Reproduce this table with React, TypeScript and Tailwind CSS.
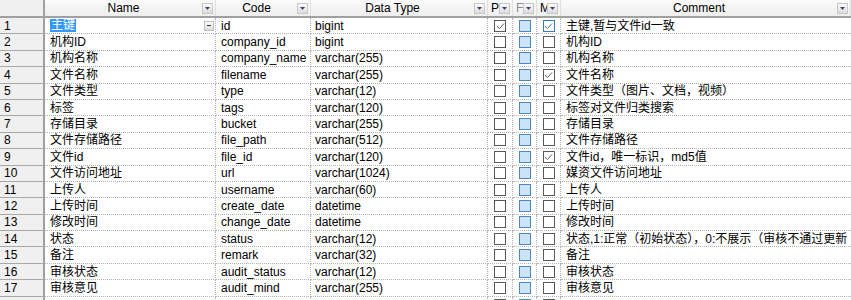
import React from "react";

type Row = {
  name: string;
  code: string;
  type: string;
  p: boolean;
  m: boolean;
  comment: string;
};

const rows: Row[] = [
  { name: "主键", code: "id", type: "bigint", p: true, m: true, comment: "主键,暂与文件id一致" },
  { name: "机构ID", code: "company_id", type: "bigint", p: false, m: false, comment: "机构ID" },
  { name: "机构名称", code: "company_name", type: "varchar(255)", p: false, m: false, comment: "机构名称" },
  { name: "文件名称", code: "filename", type: "varchar(255)", p: false, m: true, comment: "文件名称" },
  { name: "文件类型", code: "type", type: "varchar(12)", p: false, m: false, comment: "文件类型（图片、文档，视频）" },
  { name: "标签", code: "tags", type: "varchar(120)", p: false, m: false, comment: "标签对文件归类搜索" },
  { name: "存储目录", code: "bucket", type: "varchar(255)", p: false, m: false, comment: "存储目录" },
  { name: "文件存储路径", code: "file_path", type: "varchar(512)", p: false, m: false, comment: "文件存储路径" },
  { name: "文件id", code: "file_id", type: "varchar(120)", p: false, m: true, comment: "文件id，唯一标识，md5值" },
  { name: "文件访问地址", code: "url", type: "varchar(1024)", p: false, m: false, comment: "媒资文件访问地址" },
  { name: "上传人", code: "username", type: "varchar(60)", p: false, m: false, comment: "上传人" },
  { name: "上传时间", code: "create_date", type: "datetime", p: false, m: false, comment: "上传时间" },
  { name: "修改时间", code: "change_date", type: "datetime", p: false, m: false, comment: "修改时间" },
  { name: "状态", code: "status", type: "varchar(12)", p: false, m: false, comment: "状态,1:正常（初始状态），0:不展示（审核不通过更新" },
  { name: "备注", code: "remark", type: "varchar(32)", p: false, m: false, comment: "备注" },
  { name: "审核状态", code: "audit_status", type: "varchar(12)", p: false, m: false, comment: "审核状态" },
  { name: "审核意见", code: "audit_mind", type: "varchar(255)", p: false, m: false, comment: "审核意见" },
];

const font = { fontFamily: '"Liberation Sans", "Noto Sans CJK SC", sans-serif' };

function DropBtn() {
  return (
    <div className="w-[11px] h-[11px] flex items-center justify-center border border-[#c8c8c8] bg-gradient-to-b from-[#fafafa] to-[#dcdcdc] shrink-0">
      <svg width="5" height="3" viewBox="0 0 5 3">
        <path d="M0 0 L5 0 L2.5 3 Z" fill="#3a4a6a" />
      </svg>
    </div>
  );
}

function Check({ checked, variant }: { checked: boolean; variant: "grey" | "blue" | "fill" }) {
  const cls =
    variant === "fill"
      ? "border-[#4d87c0] bg-[#cce4f7]"
      : variant === "blue"
      ? "border-[#3d7ab8] bg-white"
      : "border-[#5a5a5a] bg-white";
  return (
    <div className={`w-[12px] h-[12px] border ${cls} flex items-center justify-center`}>
      {checked && (
        <svg width="9" height="8" viewBox="0 0 9 8">
          <path
            d="M1 4 L3.5 6.5 L8 1.5"
            fill="none"
            stroke={variant === "blue" ? "#3d7ab8" : "#606060"}
            strokeWidth="1"
          />
        </svg>
      )}
    </div>
  );
}

function HeaderCell({
  w,
  label,
  light,
  align = "center",
}: {
  w: string;
  label: string;
  light?: boolean;
  align?: "center" | "left";
}) {
  return (
    <div className={`${w} h-full flex items-center border-r border-[#e0e0e0] pr-[2px] shrink-0`}>
      <div
        className={`flex-1 overflow-hidden whitespace-nowrap ${
          align === "center" ? "text-center" : "text-left pl-[3px]"
        } ${light ? "text-[#8a8a8a]" : "text-black"}`}
      >
        {label}
      </div>
      <DropBtn />
    </div>
  );
}

export default function App() {
  return (
    <div className="w-[851px] h-[300px] overflow-hidden bg-white text-[12px] text-black" style={font}>
      {/* header */}
      <div className="flex h-[18px] border-b-2 border-[#a0a0a0] bg-gradient-to-b from-[#fbfbfb] to-[#eeeeee]">
        <div className="w-[45px] h-full border-r-2 border-[#a0a0a0] bg-[#f0f0f0] shrink-0" />
        <HeaderCell w="w-[171px]" label="Name" />
        <HeaderCell w="w-[95px]" label="Code" />
        <HeaderCell w="w-[177px]" label="Data Type" />
        <HeaderCell w="w-[25px]" label="P" align="left" />
        <HeaderCell w="w-[24px]" label="F" align="left" light />
        <HeaderCell w="w-[24px]" label="M" align="left" />
        <HeaderCell w="flex-1" label="Comment" />
      </div>
      {rows.map((r, i) => (
        <div key={i} className="flex h-[16.4px]">
          <div className="w-[45px] h-full border-r-2 border-b border-r-[#a0a0a0] border-b-[#a8a8a8] bg-[#f0f0f0] pl-[4px] flex items-center shrink-0">
            {i + 1}
          </div>
          <div className="w-[171px] h-full border-r border-b border-dotted border-[#b4b4b4] pl-[5px] pr-[1px] flex items-center shrink-0">
            {i === 0 ? (
              <>
                <span className="bg-[#3399ff] text-white px-[1px] leading-[13px]">{r.name}</span>
                <div className="flex-1" />
                <div className="w-[10px] h-[10px] border border-[#c0c0c0] bg-gradient-to-b from-[#fafafa] to-[#dddddd] flex items-center justify-center">
                  <div className="w-[4px] h-[1px] bg-[#333]" />
                </div>
              </>
            ) : (
              <span className="whitespace-nowrap">{r.name}</span>
            )}
          </div>
          <div className="w-[95px] h-full border-r border-b border-dotted border-[#b4b4b4] pl-[5px] flex items-center shrink-0 whitespace-nowrap overflow-hidden">
            {r.code}
          </div>
          <div className="w-[177px] h-full border-r border-b border-dotted border-[#b4b4b4] pl-[4px] flex items-center shrink-0 whitespace-nowrap">
            {r.type}
          </div>
          <div className="w-[25px] h-full border-r border-b border-dotted border-[#b4b4b4] flex items-center justify-center shrink-0">
            <Check checked={r.p} variant="grey" />
          </div>
          <div className="w-[24px] h-full border-r border-b border-dotted border-[#b4b4b4] flex items-center justify-center shrink-0">
            <Check checked={false} variant="fill" />
          </div>
          <div className="w-[24px] h-full border-r border-b border-dotted border-[#b4b4b4] flex items-center justify-center shrink-0">
            <Check checked={r.m} variant={i === 0 ? "blue" : "grey"} />
          </div>
          <div className="flex-1 h-full border-b border-dotted border-[#b4b4b4] pl-[5px] flex items-center whitespace-nowrap overflow-hidden">
            {r.comment}
          </div>
        </div>
      ))}
      <div className="flex h-[16px]">
        <div className="w-[45px] h-full border-r-2 border-r-[#a0a0a0] bg-[#f0f0f0] shrink-0" />
        <div className="w-[171px] h-full border-r border-dotted border-[#b4b4b4] shrink-0" />
        <div className="w-[95px] h-full border-r border-dotted border-[#b4b4b4] shrink-0" />
        <div className="w-[177px] h-full border-r border-dotted border-[#b4b4b4] shrink-0" />
        <div className="w-[25px] h-full border-r border-dotted border-[#b4b4b4] flex justify-center pt-[2px] shrink-0">
          <Check checked={false} variant="grey" />
        </div>
        <div className="w-[24px] h-full border-r border-dotted border-[#b4b4b4] flex justify-center pt-[2px] shrink-0">
          <Check checked={false} variant="fill" />
        </div>
        <div className="w-[24px] h-full border-r border-dotted border-[#b4b4b4] flex justify-center pt-[2px] shrink-0">
          <Check checked={false} variant="grey" />
        </div>
        <div className="flex-1" />
      </div>
    </div>
  );
}
